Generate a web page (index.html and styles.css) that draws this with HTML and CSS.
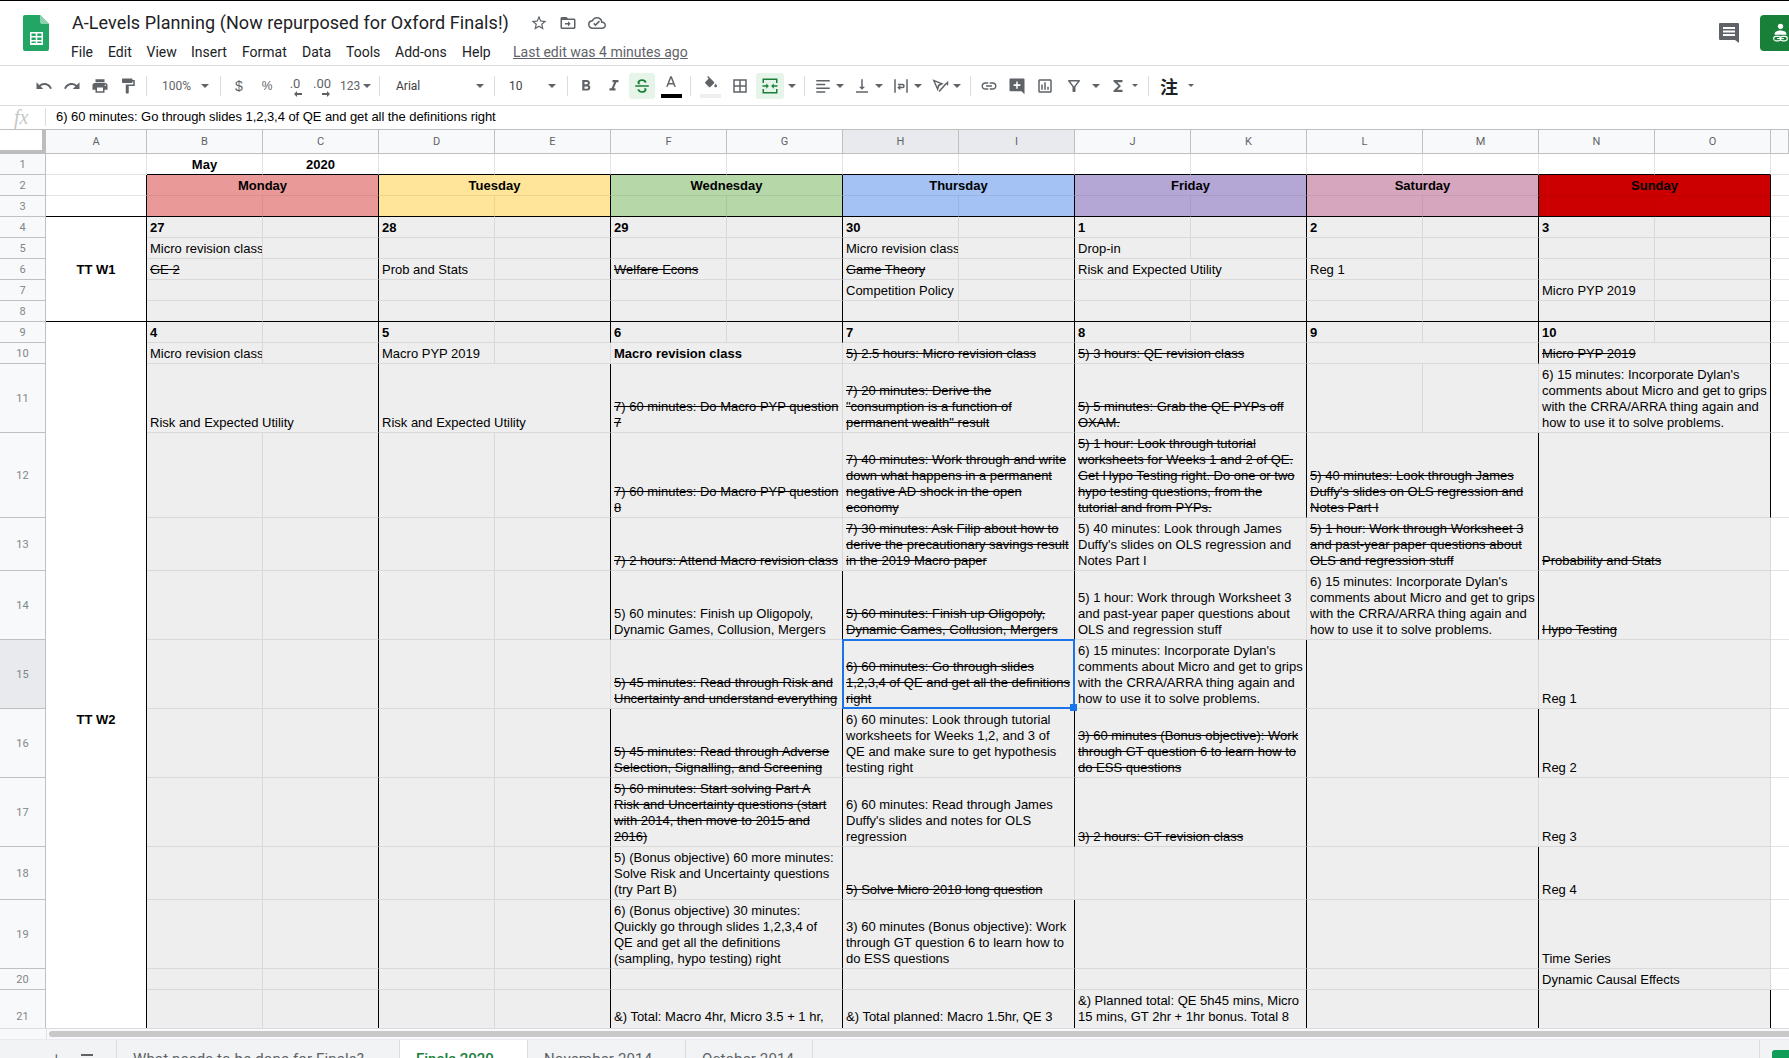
FILE: index.html
```html
<!DOCTYPE html>
<html lang="en">
<head>
<meta charset="utf-8">
<title>A-Levels Planning</title>
<link rel="stylesheet" href="styles.css">
</head>
<body>
<div class="app">
  <header class="titlebar">
    <svg class="logo" viewBox="0 0 26 36" width="26" height="36"><path fill="#23a566" d="M2 0h15l9 9v25a2 2 0 0 1-2 2H2a2 2 0 0 1-2-2V2a2 2 0 0 1 2-2z"/><path fill="#8ed1b1" d="M17 0l9 9h-7a2 2 0 0 1-2-2z"/><path fill="#fff" fill-rule="evenodd" d="M7 17h13v13H7zm1.500 1.500v2.500h4.200v-2.500zm5.800 0v2.500h4.200v-2.500zm-5.800 4v2.500h4.200v-2.500zm5.800 0v2.500h4.200v-2.500zm-5.800 4v1.500h4.200v-1.500zm5.800 0v1.500h4.200v-1.500z"/></svg>
    <div class="docinfo">
      <div class="titlerow">
        <span class="doctitle">A-Levels Planning (Now repurposed for Oxford Finals!)</span>
        <svg class="ti first" viewBox="0 0 24 24" width="18" height="18"><path fill="#5f6368" d="M22 9.240l-7.190-.62L12 2 9.190 8.630 2 9.240l5.460 4.730L5.820 21 12 17.270 18.180 21l-1.630-7.030L22 9.240zM12 15.400l-3.760 2.270 1-4.280-3.320-2.880 4.380-.38L12 6.100l1.710 4.040 4.380.38-3.320 2.880 1 4.280L12 15.400z"/></svg>
        <svg class="ti" viewBox="0 0 24 24" width="18" height="18"><path fill="#5f6368" d="M20 6h-8l-2-2H4c-1.100 0-2 .9-2 2v12c0 1.100.9 2 2 2h16c1.100 0 2-.9 2-2V8c0-1.100-.9-2-2-2zm0 12H4V8h16v10zM12 9.500l3.500 3.500-3.500 3.500V14H8v-2h4V9.500z"/></svg>
        <svg class="ti" viewBox="0 0 24 24" width="18" height="18"><path fill="#5f6368" d="M19.350 10.040A7.490 7.490 0 0 0 12 4C9.110 4 6.600 5.640 5.350 8.040A5.994 5.994 0 0 0 0 14c0 3.310 2.690 6 6 6h13c2.760 0 5-2.240 5-5 0-2.640-2.050-4.780-4.650-4.960zM19 18H6c-2.210 0-4-1.790-4-4s1.790-4 4-4h.71C7.370 7.690 9.480 6 12 6c3.040 0 5.500 2.460 5.500 5.500v.5H19c1.660 0 3 1.340 3 3s-1.340 3-3 3zm-9-1.800l-3-3 1.400-1.400 1.600 1.600 4.600-4.600 1.400 1.400z"/></svg>
      </div>
      <nav class="menurow">
        <span class="m m1">File</span><span class="m m2">Edit</span><span class="m m3">View</span><span class="m m4">Insert</span><span class="m m5">Format</span><span class="m m6">Data</span><span class="m m7">Tools</span><span class="m m8">Add-ons</span><span class="m m9">Help</span><span class="lastedit">Last edit was 4 minutes ago</span>
      </nav>
    </div>
    <svg class="commenticon" viewBox="0 0 20 20" width="20" height="20"><path fill="#5f6368" d="M1 0h18a1 1 0 0 1 1 1v19l-4-3H1a1 1 0 0 1-1-1V1a1 1 0 0 1 1-1z"/><path fill="#fff" d="M4 4h12v2H4zM4 7.500h12v2H4zM4 11h12v2H4z"/></svg>
    <div class="share">
      <svg viewBox="0 0 24 26" width="20" height="26"><circle cx="9" cy="5" r="3.200" fill="#fff"/><path fill="#fff" d="M2 14c0-2.800 4-4 7-4s7 1.200 7 4v1H2z"/><rect x="0.800" y="17" width="8.500" height="5.400" rx="2.700" fill="none" stroke="#fff" stroke-width="1.300"/><rect x="8.700" y="17" width="8.500" height="5.400" rx="2.700" fill="none" stroke="#fff" stroke-width="1.300"/><path fill="#fff" d="M5 19h8v1.300H5z"/></svg>
    </div>
  </header>

  <div class="toolbar">
    <span class="b"><svg viewBox="0 0 24 24" class="ic"><path d="M12.500 8c-2.650 0-5.050.99-6.900 2.600L2 7v9h9l-3.620-3.620c1.390-1.160 3.160-1.880 5.120-1.880 3.540 0 6.550 2.310 7.600 5.500l2.370-.78C21.080 11.030 17.150 8 12.500 8z"/></svg></span>
    <span class="b"><svg viewBox="0 0 24 24" class="ic"><path d="M18.400 10.600C16.550 8.990 14.150 8 11.500 8c-4.650 0-8.580 3.030-9.960 7.220L3.900 16c1.050-3.190 4.050-5.500 7.600-5.500 1.950 0 3.730.72 5.120 1.880L13 16h9V7l-3.600 3.600z"/></svg></span>
    <span class="b"><svg viewBox="0 0 24 24" class="ic"><path d="M19 8H5c-1.660 0-3 1.340-3 3v6h4v4h12v-4h4v-6c0-1.660-1.340-3-3-3zm-3 11H8v-5h8v5zm3-7c-.55 0-1-.45-1-1s.45-1 1-1 1 .45 1 1-.45 1-1 1zm-1-9H6v4h12V3z"/></svg></span>
    <span class="b"><svg viewBox="0 0 24 24" class="ic"><path d="M18 4V3c0-.55-.45-1-1-1H5c-.55 0-1 .45-1 1v4c0 .55.45 1 1 1h12c.55 0 1-.45 1-1V6h1v4H9v11c0 .55.45 1 1 1h2c.55 0 1-.45 1-1v-9h8V4h-3z"/></svg></span>
    <i class="sep"></i>
    <span class="drop w65"><span class="t">100%</span><i class="caret"></i></span>
    <i class="sep"></i>
    <span class="b tx">$</span>
    <span class="b tx small">%</span>
    <span class="b dec"><span class="dt">.0</span><svg viewBox="0 0 8 6" width="8" height="6"><path fill="#5f6368" d="M0 3l3-3v2h5v2H3v2z"/></svg></span>
    <span class="b dec dec2"><span class="dt">.00</span><svg viewBox="0 0 8 6" width="8" height="6"><path fill="#5f6368" d="M8 3L5 0v2H0v2h5v2z"/></svg></span>
    <span class="num"><span class="t">123</span><i class="caret"></i></span>
    <i class="sep"></i>
    <span class="drop w106"><span class="t dk">Arial</span><i class="caret"></i></span>
    <i class="sep"></i>
    <span class="drop w64"><span class="t dk">10</span><i class="caret"></i></span>
    <i class="sep"></i>
    <span class="b"><svg viewBox="0 0 24 24" class="ic"><path d="M15.600 10.790c.97-.67 1.650-1.770 1.650-2.790 0-2.260-1.750-4-4-4H7v14h7.040c2.090 0 3.710-1.700 3.710-3.790 0-1.520-.86-2.820-2.150-3.420zM10 6.500h3c.83 0 1.500.67 1.500 1.500s-.67 1.500-1.500 1.500h-3v-3zm3.500 9H10v-3h3.500c.83 0 1.500.67 1.500 1.500s-.67 1.500-1.500 1.500z"/></svg></span>
    <span class="b"><svg viewBox="0 0 24 24" class="ic"><path d="M10 4v3h2.210l-3.420 8H6v3h8v-3h-2.210l3.420-8H18V4z"/></svg></span>
    <span class="b on"><svg viewBox="0 0 24 24" class="ic gr"><path d="M6 7.500C6 5 8.500 3 12 3s5.500 1.600 6 4.200l-2.600.5C15 6.200 13.800 5.400 12 5.400c-2 0-3.300.9-3.300 2.100 0 .9.500 1.600 1.900 2.100H7c-.6-.6-1-1.300-1-2.100zM3 11h18v2H3zM18 16.500c0 2.700-2.600 4.500-6 4.500-3.600 0-5.700-1.600-6.200-4.300l2.600-.5c.4 1.600 1.600 2.400 3.600 2.400 2.100 0 3.300-.8 3.300-2.100 0-.6-.2-1-.6-1.500H17.500c.3.500.5 1 .5 1.500z"/></svg></span>
    <span class="b colorbtn"><svg viewBox="0 0 24 24" class="ic up"><path d="M11 3L5.500 17h2.250l1.120-3h6.250l1.120 3h2.250L13 3h-2zm-1.380 9L12 5.670 14.380 12H9.620z"/></svg><i class="bar black"></i></span>
    <i class="sep nar"></i>
    <span class="b colorbtn fill"><svg viewBox="0 0 24 24" class="ic bucket"><path d="M16.560 8.940L7.620 0 6.210 1.410l2.380 2.380-5.150 5.150c-.59.590-.59 1.540 0 2.120l5.500 5.500c.29.29.68.44 1.060.44s.77-.15 1.060-.44l5.500-5.500c.59-.58.59-1.530 0-2.120zM19 11.500s-2 2.170-2 3.500c0 1.100.9 2 2 2s2-.9 2-2c0-1.330-2-3.500-2-3.500z"/></svg><i class="bar pale"></i></span>
    <span class="b"><svg viewBox="0 0 24 24" class="ic"><path d="M3 3v18h18V3H3zm8 16H5v-6h6v6zm0-8H5V5h6v6zm8 8h-6v-6h6v6zm0-8h-6V5h6v6z"/></svg></span>
    <span class="b on merge"><svg viewBox="0 0 24 24" class="ic gr"><path d="M2 2h20v6h-2V4H4v4H2zM2 16h2v4h16v-4h2v6H2zM2 11h5V8.500l3.500 3.500L7 15.500V13H2zM22 11h-5V8.500L13.500 12l3.500 3.500V13h5z"/></svg></span>
    <span class="capbox"><i class="caret"></i></span>
    <i class="sep"></i>
    <span class="g39"><svg viewBox="0 0 24 24" class="ic"><path d="M3 4h18v2H3zM3 9h12v2H3zM3 14h18v2H3zM3 19h12v2H3z"/></svg><i class="caret"></i></span>
    <span class="g39"><svg viewBox="0 0 24 24" class="ic"><path d="M16 13h-3V3h-2v10H8l4 4 4-4zM4 19v2h16v-2H4z"/></svg><i class="caret"></i></span>
    <span class="g39"><svg viewBox="0 0 24 24" class="ic"><path d="M3 3h2v18H3zM19 3h2v18h-2zM8 9h6a3 3 0 0 1 0 6h-3v2.500L7 14l4-3.500V13h3a1 1 0 0 0 0-2H8z"/></svg><i class="caret"></i></span>
    <span class="g39"><svg viewBox="0 0 24 24" class="ic"><path fill-rule="evenodd" d="M2 3l15 6-6 3-2 7zM5.500 6.200l3 7 .8-2.800 2.700-1.300zM20 8l3-3v6h-2V9.200L11.500 20 10 18.500 19.500 8z"/></svg><i class="caret"></i></span>
    <i class="sep wide"></i>
    <span class="b"><svg viewBox="0 0 24 24" class="ic"><path d="M3.900 12c0-1.710 1.390-3.100 3.100-3.100h4V7H7c-2.760 0-5 2.240-5 5s2.240 5 5 5h4v-1.900H7c-1.710 0-3.100-1.390-3.100-3.100zM8 13h8v-2H8v2zm9-6h-4v1.900h4c1.710 0 3.100 1.390 3.100 3.100s-1.390 3.100-3.100 3.100h-4V17h4c2.760 0 5-2.240 5-5s-2.240-5-5-5z"/></svg></span>
    <span class="b"><svg viewBox="0 0 24 24" class="ic"><path fill-rule="evenodd" d="M3 2h18a1 1 0 0 1 1 1v20l-4-4H3a1 1 0 0 1-1-1V3a1 1 0 0 1 1-1zm8 4v3.500H7.500v2.500H11v3.500h2V12h3.500V9.500H13V6z"/></svg></span>
    <span class="b"><svg viewBox="0 0 24 24" class="ic"><path d="M19 3H5c-1.100 0-2 .9-2 2v14c0 1.100.9 2 2 2h14c1.100 0 2-.9 2-2V5c0-1.100-.9-2-2-2zm0 16H5V5h14v14zM7 10h2v7H7zm4-3h2v10h-2zm4 6h2v4h-2z"/></svg></span>
    <span class="g45"><svg viewBox="0 0 24 24" class="ic"><path d="M4.250 5.610C6.270 8.200 10 13 10 13v6c0 .55.45 1 1 1h2c.55 0 1-.45 1-1v-6s3.720-4.800 5.740-7.390C20.250 4.950 19.780 4 18.950 4H5.040c-.83 0-1.300.95-.79 1.610zM7 6h10l-5 6.500z" fill-rule="evenodd"/></svg><i class="caret"></i></span>
    <span class="g39"><svg viewBox="0 0 24 24" class="ic"><path d="M18 4H6v2l6.500 6L6 18v2h12v-3h-7l5-5-5-5h7V4z"/></svg><i class="caret sm"></i></span>
    <i class="sep wide"></i>
    <span class="ime"><span class="cjk">注</span><i class="caret sm"></i></span>
  </div>

  <div class="formulabar">
    <span class="fx">fx</span>
    <i class="fxsep"></i>
    <span class="ftext">6) 60 minutes: Go through slides 1,2,3,4 of QE and get all the definitions right</span>
  </div>

  <div class="sheet">
    <table class="grid">
      <colgroup>
        <col class="c-rh"><col class="c-a">
        <col class="c"><col class="c"><col class="c"><col class="c"><col class="c"><col class="c"><col class="c"><col class="c"><col class="c"><col class="c"><col class="c"><col class="c"><col class="c"><col class="c">
        <col class="c-p">
      </colgroup>
      <thead>
        <tr class="colhead">
          <th class="corner"></th><th>A</th><th>B</th><th>C</th><th>D</th><th>E</th><th>F</th><th>G</th><th class="sel-h">H</th><th class="sel-h">I</th><th>J</th><th>K</th><th>L</th><th>M</th><th>N</th><th>O</th><th></th>
        </tr>
      </thead>
      <tbody>
        <tr class="h21 kb white">
          <th class="rh">1</th><td class="nb"></td><td class="bold ctr">May</td><td class="bold ctr">2020</td><td></td><td></td><td></td><td></td><td></td><td></td><td></td><td></td><td></td><td></td><td></td><td></td><td class="p"></td>
        </tr>
        <tr class="h21">
          <th class="rh">2</th><td class="w k"></td>
          <td class="hd mon k" colspan="2">Monday</td><td class="hd tue k" colspan="2">Tuesday</td><td class="hd wed k" colspan="2">Wednesday</td><td class="hd thu k" colspan="2">Thursday</td><td class="hd fri k" colspan="2">Friday</td><td class="hd sat k" colspan="2">Saturday</td><td class="hd sun k" colspan="2">Sunday</td>
          <td class="p"></td>
        </tr>
        <tr class="h21 kb">
          <th class="rh">3</th><td class="w k"></td>
          <td class="mon"></td><td class="mon k"></td><td class="tue"></td><td class="tue k"></td><td class="wed"></td><td class="wed k"></td><td class="thu"></td><td class="thu k"></td><td class="fri"></td><td class="fri k"></td><td class="sat"></td><td class="sat k"></td><td class="sun"></td><td class="sun k"></td>
          <td class="p"></td>
        </tr>
        <tr class="h21 d">
          <th class="rh">4</th><td class="w k week kbc bold ctr mid" rowspan="5">TT W1</td>
          <td class="bold">27</td><td class="k"></td><td class="bold">28</td><td class="k"></td><td class="bold">29</td><td class="k"></td><td class="bold">30</td><td class="k"></td><td class="bold">1</td><td class="k"></td><td class="bold">2</td><td class="k"></td><td class="bold">3</td><td class="k"></td>
          <td class="p"></td>
        </tr>
        <tr class="h21 d">
          <th class="rh">5</th>
          <td class="clip">Micro revision class</td><td class="k"></td><td></td><td class="k"></td><td></td><td class="k"></td><td class="clip">Micro revision class</td><td class="k"></td><td>Drop-in</td><td class="k"></td><td></td><td class="k"></td><td></td><td class="k"></td>
          <td class="p"></td>
        </tr>
        <tr class="h21 d">
          <th class="rh">6</th>
          <td class="s">GE 2</td><td class="k"></td><td class="clip">Prob and Stats</td><td class="k"></td><td class="s clip">Welfare Econs</td><td class="k"></td><td class="s clip">Game Theory</td><td class="k"></td><td class="k" colspan="2">Risk and Expected Utility</td><td>Reg 1</td><td class="k"></td><td></td><td class="k"></td>
          <td class="p"></td>
        </tr>
        <tr class="h21 d">
          <th class="rh">7</th>
          <td></td><td class="k"></td><td></td><td class="k"></td><td></td><td class="k"></td><td class="clip">Competition Policy</td><td class="k"></td><td></td><td class="k"></td><td></td><td class="k"></td><td class="clip">Micro PYP 2019</td><td class="k"></td>
          <td class="p"></td>
        </tr>
        <tr class="h21 d kb">
          <th class="rh">8</th>
          <td></td><td class="k"></td><td></td><td class="k"></td><td></td><td class="k"></td><td></td><td class="k"></td><td></td><td class="k"></td><td></td><td class="k"></td><td></td><td class="k"></td>
          <td class="p"></td>
        </tr>
        <tr class="h21 d">
          <th class="rh">9</th><td class="w k bold ctr mid" rowspan="14">TT W2</td>
          <td class="bold">4</td><td class="k"></td><td class="bold">5</td><td class="k"></td><td class="bold">6</td><td class="k"></td><td class="bold">7</td><td class="k"></td><td class="bold">8</td><td class="k"></td><td class="bold">9</td><td class="k"></td><td class="bold">10</td><td class="k"></td>
          <td class="p"></td>
        </tr>
        <tr class="h21 d">
          <th class="rh">10</th>
          <td class="clip">Micro revision class</td><td class="k"></td><td class="clip">Macro PYP 2019</td><td></td>
          <td class="bold" colspan="2">Macro revision class</td>
          <td class="s k" colspan="2">5) 2.5 hours: Micro revision class</td>
          <td class="s k" colspan="2">5) 3 hours: QE revision class</td>
          <td class="k" colspan="2"></td>
          <td class="s k" colspan="2">Micro PYP 2019</td>
          <td class="p"></td>
        </tr>
        <tr class="h69 d">
          <th class="rh">11</th>
          <td class="k" colspan="2">Risk and Expected Utility</td>
          <td class="k" colspan="2">Risk and Expected Utility</td>
          <td class="s" colspan="2">7) 60 minutes: Do Macro PYP question 7</td>
          <td class="s k" colspan="2">7) 20 minutes: Derive the "consumption is a function of permanent wealth" result</td>
          <td class="s k" colspan="2">5) 5 minutes: Grab the QE PYPs off OXAM.</td>
          <td></td><td></td>
          <td class="k" colspan="2">6) 15 minutes: Incorporate Dylan's comments about Micro and get to grips with the CRRA/ARRA thing again and how to use it to solve problems.</td>
          <td class="p"></td>
        </tr>
        <tr class="h85 d">
          <th class="rh">12</th>
          <td></td><td class="k"></td><td></td><td class="k"></td>
          <td class="s" colspan="2">7) 60 minutes: Do Macro PYP question 8</td>
          <td class="s k" colspan="2">7) 40 minutes: Work through and write down what happens in a permanent negative AD shock in the open economy</td>
          <td class="s k" colspan="2">5) 1 hour: Look through tutorial worksheets for Weeks 1 and 2 of QE. Get Hypo Testing right. Do one or two hypo testing questions, from the tutorial and from PYPs.</td>
          <td class="s k" colspan="2">5) 40 minutes: Look through James Duffy's slides on OLS regression and Notes Part I</td>
          <td class="k" colspan="2"></td>
          <td class="p"></td>
        </tr>
        <tr class="h53 d">
          <th class="rh">13</th>
          <td></td><td class="k"></td><td></td><td class="k"></td>
          <td class="s" colspan="2">7) 2 hours: Attend Macro revision class</td>
          <td class="s k" colspan="2">7) 30 minutes: Ask Filip about how to derive the precautionary savings result in the 2019 Macro paper</td>
          <td colspan="2">5) 40 minutes: Look through James Duffy's slides on OLS regression and Notes Part I</td>
          <td class="s k" colspan="2">5) 1 hour: Work through Worksheet 3 and past-year paper questions about OLS and regression stuff</td>
          <td class="s" colspan="2">Probability and Stats</td>
          <td class="p"></td>
        </tr>
        <tr class="h69 d">
          <th class="rh">14</th>
          <td></td><td class="k"></td><td></td><td class="k"></td>
          <td class="k" colspan="2">5) 60 minutes: Finish up Oligopoly, Dynamic Games, Collusion, Mergers</td>
          <td class="s k" colspan="2">5) 60 minutes: Finish up Oligopoly, Dynamic Games, Collusion, Mergers</td>
          <td colspan="2">5) 1 hour: Work through Worksheet 3 and past-year paper questions about OLS and regression stuff</td>
          <td class="k" colspan="2">6) 15 minutes: Incorporate Dylan's comments about Micro and get to grips with the CRRA/ARRA thing again and how to use it to solve problems.</td>
          <td class="s" colspan="2">Hypo Testing</td>
          <td class="p"></td>
        </tr>
        <tr class="h69 d rowsel">
          <th class="rh sel-h">15</th>
          <td></td><td class="k"></td><td></td><td></td>
          <td class="s k" colspan="2">5) 45 minutes: Read through Risk and Uncertainty and understand everything</td>
          <td class="s k active" colspan="2">6) 60 minutes: Go through slides 1,2,3,4 of QE and get all the definitions right<div class="selbox"><i class="handle"></i></div></td>
          <td class="k" colspan="2">6) 15 minutes: Incorporate Dylan's comments about Micro and get to grips with the CRRA/ARRA thing again and how to use it to solve problems.</td>
          <td colspan="2"></td>
          <td colspan="2">Reg 1</td>
          <td class="p"></td>
        </tr>
        <tr class="h69 d">
          <th class="rh">16</th>
          <td></td><td class="k"></td><td></td><td class="k"></td>
          <td class="s k" colspan="2">5) 45 minutes: Read through Adverse Selection, Signalling, and Screening</td>
          <td class="k" colspan="2">6) 60 minutes: Look through tutorial worksheets for Weeks 1,2, and 3 of QE and make sure to get hypothesis testing right</td>
          <td class="s k" colspan="2">3) 60 minutes (Bonus objective): Work through GT question 6 to learn how to do ESS questions</td>
          <td class="k" colspan="2"></td>
          <td colspan="2">Reg 2</td>
          <td class="p"></td>
        </tr>
        <tr class="h69 d">
          <th class="rh">17</th>
          <td></td><td class="k"></td><td></td><td class="k"></td>
          <td class="s k" colspan="2">5) 60 minutes: Start solving Part A<br>Risk and Uncertainty questions (start with 2014, then move to 2015 and 2016)</td>
          <td class="k" colspan="2">6) 60 minutes: Read through James Duffy's slides and notes for OLS regression</td>
          <td class="s k" colspan="2">3) 2 hours: GT revision class</td>
          <td colspan="2"></td>
          <td colspan="2">Reg 3</td>
          <td class="p"></td>
        </tr>
        <tr class="h53 d">
          <th class="rh">18</th>
          <td></td><td class="k"></td><td></td><td class="k"></td>
          <td class="k" colspan="2">5) (Bonus objective) 60 more minutes: Solve Risk and Uncertainty questions (try Part B)</td>
          <td class="s" colspan="2">5) Solve Micro 2018 long question</td>
          <td class="k" colspan="2"></td>
          <td class="k" colspan="2"></td>
          <td colspan="2">Reg 4</td>
          <td class="p"></td>
        </tr>
        <tr class="h69 d">
          <th class="rh">19</th>
          <td></td><td class="k"></td><td></td><td class="k"></td>
          <td class="k" colspan="2">6) (Bonus objective) 30 minutes: Quickly go through slides 1,2,3,4 of QE and get all the definitions (sampling, hypo testing) right</td>
          <td class="k" colspan="2">3) 60 minutes (Bonus objective): Work through GT question 6 to learn how to do ESS questions</td>
          <td class="k" colspan="2"></td>
          <td class="k" colspan="2"></td>
          <td colspan="2">Time Series</td>
          <td class="p"></td>
        </tr>
        <tr class="h21 d">
          <th class="rh">20</th>
          <td></td><td class="k"></td><td></td><td class="k"></td>
          <td class="k" colspan="2"></td>
          <td class="k" colspan="2"></td>
          <td class="k" colspan="2"></td>
          <td class="k" colspan="2"></td>
          <td colspan="2">Dynamic Causal Effects</td>
          <td class="p"></td>
        </tr>
        <tr class="h53 d">
          <th class="rh">21</th>
          <td></td><td class="k"></td><td></td><td class="k"></td>
          <td class="k top second" colspan="2">&amp;) Total: Macro 4hr, Micro 3.5 + 1 hr,</td>
          <td class="k top second" colspan="2">&amp;) Total planned: Macro 1.5hr, QE 3</td>
          <td class="k top" colspan="2">&amp;) Planned total: QE 5h45 mins, Micro 15 mins, GT 2hr + 1hr bonus. Total 8</td>
          <td class="k" colspan="2"></td>
          <td class="k" colspan="2"></td>
          <td class="p"></td>
        </tr>
        <tr class="h73 d">
          <th class="rh"></th>
          <td colspan="14"></td>
          <td class="p"></td>
        </tr>
      </tbody>
    </table>
  </div>

  <div class="hscroll">
    <div class="hs-corner"></div>
    <div class="hs-track"><div class="hs-thumb"></div></div>
  </div>

  <div class="tabbar">
    <span class="addsheet">+</span>
    <span class="allsheets"><i></i><i></i><i></i></span>
    <span class="tab w283">What needs to be done for Finals?<i class="caret"></i></span>
    <span class="tab active w128">Finals 2020<i class="caret"></i></span>
    <span class="tab w158">November 2014<i class="caret"></i></span>
    <span class="tab w128b">October 2014<i class="caret"></i></span>
    <span class="explore"><i class="explorebtn"></i></span>
  </div>
</div>
</body>
</html>
```
FILE: styles.css
```css
* { box-sizing: border-box; }
html, body { margin: 0; height: 100%; overflow: hidden; background: #fff; }
body { font-family: "Liberation Sans", Arial, sans-serif; color: #000; }
i { font-style: normal; display: block; }

.app { height: 1058px; border-top: 1px solid #000; display: flex; flex-direction: column; overflow: hidden; }

/* title bar */
.titlebar { height: 65px; flex: none; display: flex; align-items: flex-start; border-bottom: 1px solid #dadce0; padding: 14px 0 0 23px; }
.logo { flex: none; }
.docinfo { margin-left: 22px; display: flex; flex-direction: column; margin-top: -5px; }
.titlerow { display: flex; align-items: center; height: 25px; }
.doctitle { font-family: Roboto, sans-serif; font-size: 18px; letter-spacing: .07px; color: #202124; margin-left: 1px; white-space: nowrap; }
.ti { margin-left: 11px; flex: none; }
.ti.first { margin-left: 21px; }
.menurow { display: flex; align-items: center; height: 20px; margin-top: 7px; font-family: Roboto, sans-serif; font-size: 14px; color: #202124; white-space: nowrap; }
.m { display: block; }
.m1 { width: 37px; } .m2 { width: 38.5px; } .m3 { width: 44.500px; } .m4 { width: 51px; } .m5 { width: 60px; } .m6 { width: 44px; } .m7 { width: 49px; } .m8 { width: 67px; } .m9 { width: 51px; }
.lastedit { color: #5f6368; text-decoration: underline; }
.commenticon { margin-left: auto; margin-top: 8px; flex: none; }
.share { width: 50px; height: 36px; margin-left: 21px; margin-right: -21px; flex: none; background: #188038; border-radius: 4px; display: flex; align-items: center; padding-left: 13px; }

/* toolbar */
.toolbar { height: 40px; flex: none; display: flex; align-items: center; border-bottom: 1px solid #dadce0; padding-left: 30px; font-family: Roboto, sans-serif; font-size: 12px; color: #5f6368; }
.ic { width: 18px; height: 18px; fill: #5f6368; display: block; flex: none; }
.ic.gr { fill: #188038; }
.b { width: 28px; height: 26px; flex: none; display: flex; align-items: center; justify-content: center; border-radius: 3px; }
.b.on { background: #e6f4ea; width: 26px; margin: 0 1px; }
.b.merge { width: 28px; margin: 0 0 0 2px; }
.sep { width: 1px; height: 20px; margin: 0 4px; background: #dadce0; flex: none; }
.sep.nar { margin: 0 4px 0 4px; }
.sep.wide { margin: 0 4px 0 5px; }
.t { display: block; }
.t.dk { color: #3c4043; }
.caret { width: 0; height: 0; border-left: 4px solid transparent; border-right: 4px solid transparent; border-top: 4px solid #5f6368; flex: none; }
.caret.sm { border-left-width: 3px; border-right-width: 3px; border-top-width: 3px; }
.drop { display: flex; align-items: center; justify-content: space-between; flex: none; padding: 0 7px 0 11px; height: 26px; }
.w65 { width: 65px; }
.w106 { width: 106px; padding-left: 12px; padding-right: 6px; }
.w64 { width: 64px; padding-left: 10px; }
.tx { font-family: "Liberation Sans", sans-serif; font-size: 14px; }
.tx.small { font-size: 12px; }
.dec { position: relative; flex-direction: column; gap: 0; font-size: 13px; }
.dec .dt { display: block; line-height: 14px; margin-top: 2px; }
.dec svg { margin: 0 0 0 6px; }
.dec2 { width: 26px; margin-left: 0; }
.dec2 svg { margin-left: 8px; }
.num { width: 40px; flex: none; display: flex; align-items: center; justify-content: space-between; padding: 0 4px 0 5px; }
.colorbtn { position: relative; display: block; height: 26px; }
.colorbtn .up { position: absolute; left: 6px; top: 1px; }
.colorbtn .bucket { position: absolute; left: 8px; top: 3px; width: 16px; height: 16px; }
.bar { position: absolute; left: 5px; top: 21px; width: 21px; height: 4px; }
.bar.black { background: #000; }
.bar.pale { background: #eeeeee; }
.fill { width: 31px; }
.colorbtn:not(.fill) { width: 30px; }
.capbox { width: 16px; flex: none; display: flex; justify-content: center; }
.g39, .g45, .ime { display: flex; align-items: center; flex: none; padding-left: 5px; height: 26px; }
.g39 { width: 39px; }
.g39 .caret { margin-left: 4px; }
.g45 { width: 45px; padding-left: 6px; }
.g45 .caret { margin-left: 9px; }
.g39 .caret.sm { margin-left: 5px; }
.cjk { font-family: "Noto Sans CJK SC", sans-serif; font-size: 18px; color: #202124; font-weight: 700; margin-left: 5px; }
.ime { padding-left: 2px; width: 44px; }
.ime .caret { margin-left: 10px; }

/* formula bar */
.formulabar { height: 23px; flex: none; display: flex; align-items: center; padding-bottom: 1px; }
.fx { font-family: "Liberation Serif", serif; font-style: italic; font-size: 20px; color: #c4c7c5; width: 45px; padding-left: 14px; line-height: 22px; }
.fxsep { width: 1px; height: 18px; background: #dadce0; }
.ftext { margin: -2px 0 0 10px; font-size: 13px; letter-spacing: -.06px; font-family: "Liberation Sans", sans-serif; color: #000; }

/* grid */
.sheet { height: 900px; flex: none; overflow: hidden; border-top: 1px solid #c0c0c0; border-bottom: 1px solid #dadce0; }
.grid { table-layout: fixed; border-collapse: separate; border-spacing: 0; width: 1789px; font-size: 13px; line-height: 16px; }
.c-rh { width: 46px; } .c-a { width: 101px; } .c { width: 116px; } .c-p { width: 18px; }
.colhead th { height: 24px; background: #f8f9fa; border-right: 1px solid #c0c0c0; border-bottom: 1px solid #c0c0c0; font: 400 11px/14px Roboto, sans-serif; color: #5f6368; padding: 0; }
.colhead th.sel-h { background: #e8eaed; }
.colhead th.corner { background: #fff; border-right: 4px solid #bdbdbd; border-bottom: 4px solid #bdbdbd; }
.rh { background: #f8f9fa; border-right: 1px solid #c0c0c0; border-bottom: 1px solid #c0c0c0; font: 400 11px/14px Roboto, sans-serif; color: #80868b; padding: 2px 0 0; text-align: center; }
.rh.sel-h { background: #e8eaed; }
.grid td { padding: 3px 3px 1px; border-right: 1px solid #e2e3e3; border-bottom: 1px solid #e2e3e3; vertical-align: bottom; overflow: hidden; }
.h21 > * { height: 21px; } .h53 > * { height: 53px; } .h69 > * { height: 69px; } .h85 > * { height: 85px; } .h73 > * { height: 73px; }
.d td { background: #eeeeee; border-right-color: #d9d9d9; border-bottom-color: #d9d9d9; }
.grid .k { border-right-color: #000; }
.kb td { border-bottom-color: #000; }
.grid .nb { border-bottom-color: #e2e3e3; }
.grid td.p { background: #fff; border-right: 0; border-bottom-color: #e2e3e3; }
.grid td.w { background: #fff; border-bottom-color: #e2e3e3; }
.grid td.week { border-bottom-color: #000; }
.kb td.w { border-bottom-color: #000; }
.grid td.mid { vertical-align: middle; }
.grid td.top { vertical-align: top; }
.grid td.second { padding-top: 19px; }
.bold { font-weight: 700; }
.ctr { text-align: center; }
.s { text-decoration: line-through; }
.clip { white-space: nowrap; }
.grid td.clip { padding-right: 0; }
.grid td.hd { font-weight: 700; text-align: center; vertical-align: top; border-bottom-color: rgba(0,0,0,.07); }
.mon { background: #ea9999; } .tue { background: #ffe599; } .wed { background: #b6d7a8; } .thu { background: #a4c2f4; } .fri { background: #b4a7d6; } .sat { background: #d5a6bd; } .sun { background: #cc0000; }
.kb td.mon, .kb td.tue, .kb td.wed, .kb td.thu, .kb td.fri, .kb td.sat, .kb td.sun { border-right-color: rgba(0,0,0,.07); }
.kb td.k.mon, .kb td.k.tue, .kb td.k.wed, .kb td.k.thu, .kb td.k.fri, .kb td.k.sat, .kb td.k.sun { border-right-color: #000; }
.grid td.active { position: relative; overflow: visible; }
.selbox { position: absolute; left: -1px; right: -1px; top: -1px; bottom: -1px; border: 2px solid #1a73e8; pointer-events: none; }
.handle { position: absolute; right: -4px; bottom: -4px; width: 7px; height: 7px; background: #1a73e8; }

/* scroll + tabs */
.hscroll { height: 11px; flex: none; display: flex; background: #f8f9fa; border-bottom: 1px solid #e8eaed; }
.hs-corner { width: 47px; flex: none; border-right: 1px solid #e2e3e3; }
.hs-track { flex: 1; padding: 2px 0 0 2px; }
.hs-thumb { height: 6px; background: #c8c8c8; border-radius: 3px 0 0 3px; }
.tabbar { height: 40px; flex: none; background: #f1f3f4; display: flex; font-family: Roboto, sans-serif; font-size: 15px; color: #5f6368; position: relative; }
.addsheet { width: 78px; text-align: right; padding: 9px 16px 0 0; font-size: 20px; line-height: 20px; font-weight: 300; }
.allsheets { width: 38px; padding: 14px 0 0 3px; }
.allsheets i { width: 12px; height: 2px; background: #5f6368; margin-bottom: 2px; }
.tab { flex: none; display: flex; align-items: baseline; border-left: 1px solid #dadce0; padding: 10px 0 0 16px; white-space: nowrap; line-height: 18px; letter-spacing: .15px; }
.tab .caret { margin-left: 10px; align-self: center; }
.w283 { width: 283px; }
.w128 { width: 128px; }
.w158 { width: 158px; }
.w128b { width: 128px; border-right: 1px solid #dadce0; }
.tab.active { background: #fff; color: #188038; font-weight: 500; letter-spacing: 0; }
.tab.active .caret { border-top-color: #188038; }
.explore { position: absolute; left: 1759px; top: 0; bottom: 0; width: 30px; border-left: 1px solid #dadce0; }
.explorebtn { position: absolute; left: 12px; top: 10px; width: 18px; height: 20px; background: #0f9d58; border-radius: 3px 0 0 3px; }
```
